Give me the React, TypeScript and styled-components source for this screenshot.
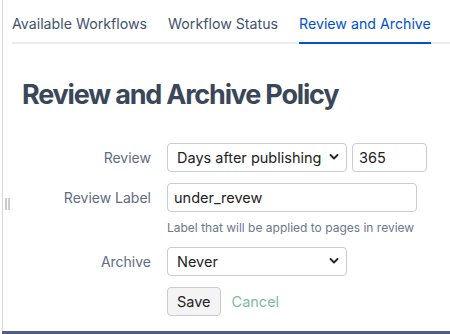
import React, { useState } from 'react';
import styled, { createGlobalStyle } from 'styled-components';

const GlobalStyle = createGlobalStyle`
  html, body {
    margin: 0;
    padding: 0;
    background: #ffffff;
  }
  body {
    font-family: Inter, "Liberation Sans", sans-serif;
    -webkit-font-smoothing: antialiased;
  }
`;

const Page = styled.div`
  width: 450px;
  height: 334px;
  display: flex;
  flex-direction: column;
  overflow: hidden;
`;

const Frame = styled.div`
  flex: 1;
  margin-left: 2px;
  border-left: 1px solid #d6d8dc;
  position: relative;
  display: flex;
  flex-direction: column;
  min-height: 0;
`;

const BottomBar = styled.div`
  height: 3px;
  margin-left: 2px;
  background: #515c8d;
`;

const TabBar = styled.div`
  display: flex;
  gap: 21px;
  margin-left: 9px;
  padding-top: 14px;
  border-bottom: 2px solid #ebecf0;
`;

const Tab = styled.div<{ $active?: boolean }>`
  font-size: 14.2px;
  line-height: 20px;
  padding-bottom: 8px;
  margin-bottom: -2px;
  color: ${p => (p.$active ? '#0052cc' : '#42526e')};
  border-bottom: 2px solid ${p => (p.$active ? '#0052cc' : 'transparent')};
  white-space: nowrap;
  cursor: pointer;
`;

const Heading = styled.h1`
  margin: 34px 0 0 19px;
  font-size: 27px;
  line-height: 34px;
  font-weight: 700;
  letter-spacing: -1.2px;
  color: #3a4659;
`;

const Form = styled.div`
  display: grid;
  grid-template-columns: 148px auto;
  column-gap: 16px;
  row-gap: 11px;
  align-items: center;
  margin-top: 31px;
`;

const Label = styled.div`
  text-align: right;
  font-size: 14px;
  line-height: 20px;
  color: #5e6c84;
`;

const Field = styled.div`
  display: flex;
  gap: 5px;
  align-items: center;
`;

const SelectWrap = styled.div<{ $w: number }>`
  position: relative;
  width: ${p => p.$w}px;
`;

const Select = styled.select`
  appearance: none;
  width: 100%;
  height: 29px;
  box-sizing: border-box;
  border: 1px solid #c8cbd0;
  border-radius: 4px;
  background: #fff;
  padding: 0 24px 0 9px;
  font-family: Inter, "Liberation Sans", sans-serif;
  font-size: 14.5px;
  color: #222;
  outline: none;
`;

const Chevron = styled.svg`
  position: absolute;
  right: 8px;
  top: 10px;
  pointer-events: none;
`;

const TextInput = styled.input<{ $w: number }>`
  width: ${p => p.$w}px;
  height: 29px;
  box-sizing: border-box;
  border: 1px solid #c8cbd0;
  border-radius: 4px;
  padding: 0 6px;
  font-family: Inter, "Liberation Sans", sans-serif;
  font-size: 14.5px;
  color: #222;
  outline: none;
`;

const HelpRow = styled.div`
  grid-column: 2;
  font-size: 12px;
  color: #6b778c;
  margin: -3px 0 0;
  line-height: 16px;
`;

const Actions = styled.div`
  grid-column: 2;
  display: flex;
  align-items: center;
  gap: 11px;
`;

const SaveButton = styled.button`
  height: 29px;
  padding: 0 9px;
  border: 1px solid #c8cbd0;
  border-radius: 4px;
  background: #f4f4f4;
  font-family: Inter, "Liberation Sans", sans-serif;
  font-size: 14.5px;
  color: #222;
`;

const CancelLink = styled.a`
  font-size: 14.5px;
  color: #7bbba3;
  text-decoration: none;
  cursor: pointer;
`;

const Grip = styled.div`
  position: absolute;
  left: 2px;
  top: 198px;
  display: flex;
  gap: 1px;
  & > span {
    width: 2px;
    height: 12px;
    background: #c9ced6;
  }
`;

const ChevronIcon = () => (
  <Chevron width="10" height="8" viewBox="0 0 10 8">
    <path d="M1.5 2 L5 5.5 L8.5 2" fill="none" stroke="#222" strokeWidth="1.8" strokeLinecap="round" strokeLinejoin="round" />
  </Chevron>
);

export default function App() {
  const [tab, setTab] = useState(2);
  const tabs = ['Available Workflows', 'Workflow Status', 'Review and Archive'];

  return (
    <Page>
      <GlobalStyle />
      <Frame>
        <TabBar>
          {tabs.map((t, i) => (
            <Tab key={t} $active={tab === i} onClick={() => setTab(i)}>{t}</Tab>
          ))}
        </TabBar>
        <Heading>Review and Archive Policy</Heading>
        <Form>
          <Label>Review</Label>
          <Field>
            <SelectWrap $w={180}>
              <Select defaultValue="days">
                <option value="days">Days after publishing</option>
                <option value="never">Never</option>
              </Select>
              <ChevronIcon />
            </SelectWrap>
            <TextInput $w={75} defaultValue="365" />
          </Field>
          <Label>Review Label</Label>
          <Field>
            <TextInput $w={250} defaultValue="under_revew" />
          </Field>
          <HelpRow>Label that will be applied to pages in review</HelpRow>
          <Label>Archive</Label>
          <Field>
            <SelectWrap $w={180}>
              <Select defaultValue="never">
                <option value="never">Never</option>
                <option value="days">Days after publishing</option>
              </Select>
              <ChevronIcon />
            </SelectWrap>
          </Field>
          <Actions>
            <SaveButton>Save</SaveButton>
            <CancelLink>Cancel</CancelLink>
          </Actions>
        </Form>
        <Grip><span /><span /></Grip>
      </Frame>
      <BottomBar />
    </Page>
  );
}
